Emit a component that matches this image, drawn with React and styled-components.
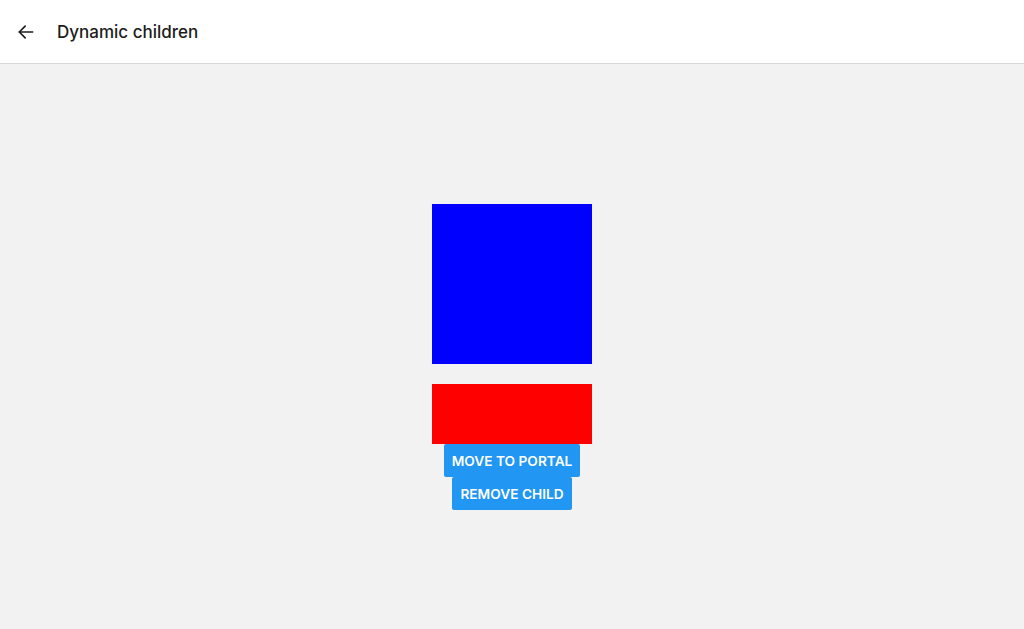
import React from 'react';
import styled, { createGlobalStyle } from 'styled-components';

const GlobalStyle = createGlobalStyle`
  html, body {
    margin: 0;
    padding: 0;
    height: 100%;
  }
  body {
    font-family: Inter, "Noto Sans", sans-serif;
    background: #f2f2f2;
  }
  #root {
    height: 100%;
  }
`;

const Page = styled.div`
  display: flex;
  flex-direction: column;
  height: 629px;
`;

const Header = styled.header`
  display: flex;
  align-items: center;
  height: 63px;
  background: #ffffff;
  border-bottom: 1px solid #d8d8d8;
  padding: 0 16px;
  box-sizing: content-box;
`;

const BackButton = styled.button`
  display: flex;
  align-items: center;
  justify-content: center;
  width: 20px;
  height: 20px;
  padding: 0;
  margin-right: 21px;
  border: none;
  background: none;
  color: #1c1c1c;
  cursor: pointer;
`;

const Title = styled.h1`
  margin: 0;
  font-size: 17px;
  font-weight: 500;
  color: #1c1c1c;
`;

const Content = styled.main`
  flex: 1;
  display: flex;
  flex-direction: column;
  align-items: center;
  padding-top: 140px;
`;

const Square = styled.div`
  width: 160px;
  height: ${(p) => p.$height}px;
  background: ${(p) => p.$color};
  margin-bottom: ${(p) => p.$gap || 0}px;
`;

const ActionButton = styled.button`
  height: 33px;
  padding: 0 8px;
  border: none;
  border-radius: 2px;
  background: #2196f3;
  color: #ffffff;
  font-family: Inter, "Noto Sans", sans-serif;
  font-size: 13.7px;
  font-weight: 600;
  text-transform: uppercase;
  cursor: pointer;
`;

export default function App() {
  return (
    <>
      <GlobalStyle />
      <Page>
        <Header>
          <BackButton aria-label="Back">
            <svg width="20" height="20" viewBox="0 0 24 24" fill="none" stroke="currentColor" strokeWidth="2" strokeLinecap="round" strokeLinejoin="round">
              <path d="M20 12H4" />
              <path d="M11 5l-7 7 7 7" />
            </svg>
          </BackButton>
          <Title>Dynamic children</Title>
        </Header>
        <Content>
          <Square $color="#0000ff" $height={160} $gap={20} />
          <Square $color="#ff0000" $height={60} />
          <ActionButton>Move to portal</ActionButton>
          <ActionButton>Remove child</ActionButton>
        </Content>
      </Page>
    </>
  );
}
